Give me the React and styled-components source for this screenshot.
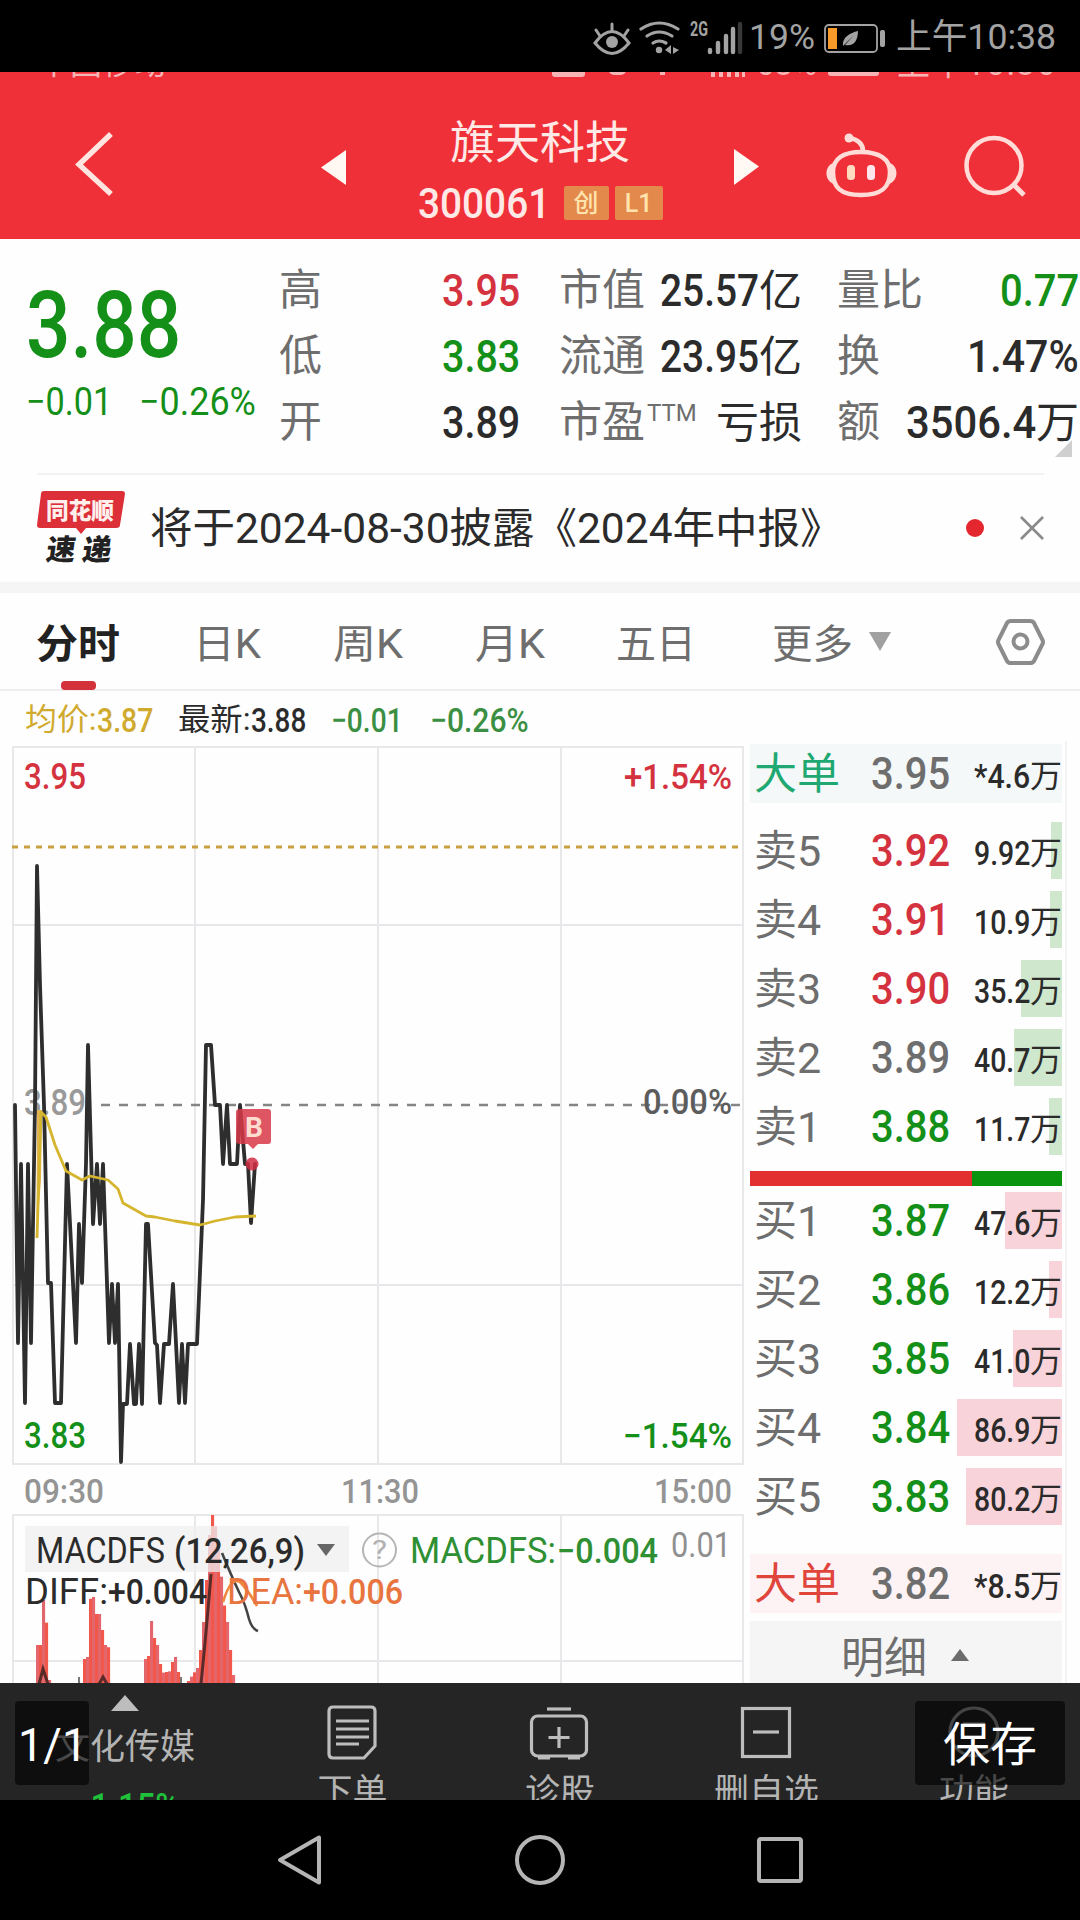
import React, { useLayoutEffect, useRef } from "react";
import styled, { createGlobalStyle } from "styled-components";

const colors = {
  header: "#f03038",
  up: "#d5323f",
  down: "#148f18",
  text: "#2b2b2b",
  label: "#6e6e6e",
  muted: "#8f8f8f",
  grid: "#e8e8ea",
  average: "#d6b52e",
  bar: "#252525",
  barText: "#b4b4b4",
};

const fontStack = `Roboto, "Noto Sans CJK SC", sans-serif`;

const GlobalStyle = createGlobalStyle`
  * { box-sizing: border-box; }
  body {
    margin: 0;
    background: #000;
    font-family: ${fontStack};
    color: ${colors.text};
  }
  svg { display: block; flex: none; }
`;

const FitBox = styled.span`
  display: inline-block;
  flex: none;
  white-space: nowrap;

  > span {
    display: inline-block;
    transform-origin: 0 50%;
  }
`;

// Condenses its text to the given width, like a DIN face would
const Fit = ({ w, className, children }) => {
  const inner = useRef(null);

  useLayoutEffect(() => {
    const el = inner.current;
    el.style.transform = `scaleX(${w / el.offsetWidth})`;
  }, [w, children]);

  return (
    <FitBox className={className} style={{ width: w }}>
      <span ref={inner}>{children}</span>
    </FitBox>
  );
};

const Screen = styled.div`
  width: 1080px;
  height: 1920px;
  display: flex;
  flex-direction: column;
  overflow: hidden;
  background: #fefefe;
`;

/* ---------- system status bar ---------- */

const StatusBar = styled.div`
  height: 72px;
  flex: none;
  padding: 3px 24px 0 0;
  background: #000;
  color: #a3a3a3;
  display: flex;
  align-items: center;
  justify-content: flex-end;
`;

const StatusText = styled(Fit)`
  font-size: 35px;
  line-height: 40px;
`;

const StatusIcons = () => (
  <svg width="160" height="40" viewBox="589 16 160 40" fill="none" stroke="#a3a3a3">
    <path d="M595 41q17-23 34 0q-17 21-34 0z" strokeWidth="3" />
    <circle cx="612" cy="40" r="6" fill="#a3a3a3" stroke="none" />
    <path d="M612 22v7M596 28l4 6M628 28l-4 6" strokeWidth="3" strokeLinecap="round" />
    <g strokeWidth="3.200" strokeLinecap="round">
      <path d="M641 27q18-12 37 0" />
      <path d="M647 34q12-8 25 0" />
      <path d="M653 41q6-4 13 0" />
    </g>
    <circle cx="659" cy="48" r="3.2" fill="#a3a3a3" stroke="none" />
    <path d="M665 48l6-5v9zM673 45l6 3-6 4z" fill="#a3a3a3" stroke="none" />
    <text
      x="690"
      y="34"
      fontSize="21"
      fontWeight="700"
      textLength="18"
      lengthAdjust="spacingAndGlyphs"
      fill="#a3a3a3"
      stroke="none"
    >
      2G
    </text>
    <g strokeWidth="4.400" strokeLinecap="round">
      <path d="M710 48v2M718 41v9M726 34v16M733 27v23" />
      <path d="M740 22v28" stroke="#383838" />
    </g>
  </svg>
);

const Battery = () => (
  <svg width="81" height="40" viewBox="815 16 81 40" fill="none">
    <rect x="825" y="23" width="52" height="27" rx="4" stroke="#a3a3a3" strokeWidth="1.8" />
    <rect x="828" y="26" width="9" height="21" fill="#f79a2a" />
    <rect x="880" y="28" width="5" height="17" rx="2" fill="#a3a3a3" />
    <path d="M843 44c-1-9 7-13 15-15 0 9-4 16-13 14l9-10z" fill="#a3a3a3" />
  </svg>
);

/* ---------- red header ---------- */

const Header = styled.header`
  height: 167px;
  flex: none;
  background: ${colors.header};
`;

const GhostStatus = styled.div`
  height: 8px;
  padding: 0 25px 0 38px;
  display: flex;
  align-items: flex-end;
  justify-content: space-between;
  overflow: hidden;
  color: #f7b4b4;
  font-size: 31px;
  line-height: 33px;
`;

const HeaderRow = styled.div`
  height: 159px;
  display: flex;
  align-items: flex-start;
`;

const TitleBlock = styled.div`
  width: 388px;
  padding-top: 33px;
  display: flex;
  flex-direction: column;
  align-items: center;
  color: #ffe9e6;
`;

const StockName = styled(Fit)`
  font-size: 45px;
  line-height: 62px;
`;

const CodeRow = styled.div`
  width: 245px;
  height: 40px;
  margin-top: 8px;
  display: flex;
  align-items: center;
`;

const StockCode = styled(Fit)`
  padding-top: 2px;
  font-size: 42px;
  line-height: 40px;
  font-weight: 500;
`;

const Badge = styled.span`
  width: ${(props) => props.$width}px;
  height: 34px;
  margin-left: ${(props) => props.$gap}px;
  border-radius: 2px;
  background: #e3894b;
  color: #ffe3ac;
  font-size: 25px;
  line-height: 35px;
  font-weight: 500;
  text-align: center;
`;

const HeaderLeftIcons = () => (
  <svg width="346" height="120" viewBox="0 80 346 120" fill="none">
    <path d="M111 134L79 164.500L111 194" stroke="#ffe4df" strokeWidth="5.400" />
    <path d="M321 167.500L346 150V185Z" fill="#fff8f3" />
  </svg>
);

const HeaderRightIcons = () => (
  <svg width="346" height="130" viewBox="734 80 346 130" fill="none">
    <path d="M734 149L759 166.500L734 185Z" fill="#fff8f3" />
    <g stroke="#ffdcd7" strokeWidth="4.500">
      <path d="M833 172c0-13 10-20 28-20s29 7 29 20c0 15-8 23-29 23s-28-8-28-23z" />
      <path d="M863 151c0-7-4-11-13-13" strokeLinecap="round" />
    </g>
    <circle cx="849" cy="138" r="4.500" fill="#ffdcd7" />
    <path d="M834 163c-10 2-10 18 0 21zM889 163c10 2 10 18 0 21z" fill="#ffdcd7" />
    <rect x="847" y="165" width="8" height="15" rx="3.500" fill="#ffdcc0" />
    <rect x="867" y="165" width="8" height="15" rx="3.500" fill="#ffe6ec" />
    <circle cx="994" cy="165.500" r="27.500" stroke="#ffdcd7" strokeWidth="4.500" />
    <path d="M1013 184l11 11" stroke="#ffdcd7" strokeWidth="5" />
  </svg>
);

/* ---------- quote ---------- */

const Quote = styled.section`
  height: 234px;
  flex: none;
  padding-top: 18px;
  display: flex;
`;

const LastPrice = styled.div`
  width: 279px;
  padding: 31px 0 0 26px;
  color: ${colors.down};
`;

const BigPrice = styled(Fit)`
  font-size: 93px;
  line-height: 76px;
  font-weight: 500;
`;

const ChangeRow = styled.div`
  display: flex;
  gap: 27px;
  margin-top: 18px;
`;

const Change = styled(Fit)`
  font-size: 39px;
  line-height: 40px;
`;

const StatColumn = styled.div`
  width: ${(props) => props.$width}px;
  margin-right: ${(props) => props.$after}px;
`;

const StatRow = styled.div`
  height: 66px;
  display: flex;
  align-items: center;
  justify-content: space-between;
  line-height: 60px;
`;

const StatLabel = styled.span`
  display: flex;
  font-size: 43px;
  color: ${colors.label};
`;

const StatValue = styled.span`
  display: flex;
  font-size: 43px;
  padding-top: 1px;
  color: ${(props) => props.color || colors.text};
`;

const StatNumber = styled(Fit)`
  font-size: 44px;
  font-weight: 500;
`;

const Superscript = styled.span`
  margin-left: 2px;
  font-size: 24px;
  line-height: 42px;
`;

const Corner = styled.i`
  width: 0;
  height: 0;
  margin: -15px 0 0 218px;
  display: block;
  border-left: 17px solid transparent;
  border-bottom: 17px solid #cfcfcf;
`;

const statColumns = [
  {
    width: 241,
    after: 39,
    rows: [
      { label: "高", num: "3.95", w: 78, color: colors.up },
      { label: "低", num: "3.83", w: 78, color: colors.down },
      { label: "开", num: "3.89", w: 78 },
    ],
  },
  {
    width: 243,
    after: 35,
    rows: [
      { label: "市值", num: "25.57", w: 99, unit: "亿" },
      { label: "流通", num: "23.95", w: 99, unit: "亿" },
      { label: "市盈", sup: "TTM", unit: "亏损" },
    ],
  },
  {
    width: 242,
    after: 0,
    rows: [
      { label: "量比", num: "0.77", w: 79, color: colors.down },
      { label: "换", num: "1.47%", w: 112 },
      { label: "额", num: "3506.4", w: 130, unit: "万" },
    ],
  },
];

/* ---------- news strip ---------- */

const News = styled.section`
  height: 109px;
  flex: none;
  margin: 0 36px 0 37px;
  border-top: 2px solid #f2f2f2;
  display: flex;
  align-items: center;
`;

const NewsText = styled(Fit)`
  margin-left: 25px;
  font-size: 42px;
  line-height: 60px;
`;

const NewsDot = styled.i`
  width: 18px;
  height: 18px;
  margin: -2px 0 0 124px;
  border-radius: 50%;
  background: #e4272f;
`;

const CloseButton = styled.span`
  margin: -1px 0 0 36px;
`;

const NewsLogo = () => (
  <svg width="88" height="76" viewBox="37 491 88 76" fontWeight="900">
    <path d="M44 491h78q3 0 3 3l-5 31q0 3-4 3H86l-5 6-5-6H40q-3 0-3-3l4-31q0-3 3-3z" fill="#dc2f38" />
    <text x="46" y="519" fontSize="23" textLength="68" lengthAdjust="spacingAndGlyphs" fill="#fff0ee">
      同花顺
    </text>
    <g transform="skewX(-8)" fontSize="29" fill="#222">
      <text x="124" y="560" textLength="29" lengthAdjust="spacingAndGlyphs">
        速
      </text>
      <text x="160" y="560" textLength="29" lengthAdjust="spacingAndGlyphs">
        递
      </text>
    </g>
  </svg>
);

const CloseIcon = () => (
  <svg width="24" height="24" viewBox="0 0 24 24">
    <path d="M1 1L23 23M23 1L1 23" stroke="#8a8a8a" strokeWidth="2.600" />
  </svg>
);

/* ---------- tabs ---------- */

const Tabs = styled.nav`
  height: 109px;
  flex: none;
  border-top: 11px solid #f5f5f5;
  border-bottom: 2px solid #eeeeee;
  padding-left: 36px;
  display: flex;
`;

const Tab = styled.div`
  margin-right: ${(props) => props.$after}px;
  height: 97px;
  padding-top: 21px;
  display: flex;
  flex-direction: column;
  align-items: center;
  font-size: 40px;
  line-height: 62px;
  font-weight: ${(props) => (props.$active ? 700 : 400)};
  color: ${(props) => (props.$active ? "#222" : colors.label)};

  &::after {
    content: "";
    width: 35px;
    height: 9px;
    margin-top: 5px;
    border-radius: 4px;
    background: ${(props) => (props.$active ? "#d4323a" : "transparent")};
  }
`;

const tabs = [
  { name: "分时", w: 84, after: 73, active: true },
  { name: "日K", w: 68, after: 72 },
  { name: "周K", w: 70, after: 72 },
  { name: "月K", w: 70, after: 71 },
  { name: "五日", w: 80, after: 76 },
  { name: "更多", w: 81, after: 15 },
];

const TabIcons = () => (
  <svg width="180" height="96" viewBox="868 593 180 96" fill="none">
    <path d="M869 632h22l-11 19z" fill="#a0a0a0" />
    <path
      d="M1011 621h19q3 0 4 2l8.500 17q1 2 0 4l-8.500 17q-1 2-4 2h-19q-3 0-4-2l-8.500-17q-1-2 0-4l8.500-17q1-2 4-2z"
      stroke="#8c8c8c"
      strokeWidth="4"
    />
    <circle cx="1020.500" cy="641.500" r="7" stroke="#8c8c8c" strokeWidth="4" />
  </svg>
);

/* ---------- price summary ---------- */

const Summary = styled.div`
  height: 50px;
  flex: none;
  padding: 8px 0 0 25px;
  display: flex;
  align-items: center;
  line-height: 42px;
`;

const SummaryItem = styled.span`
  margin-right: ${(props) => props.$after || 0}px;
  display: flex;
  font-size: 34px;
  color: ${(props) => props.color};
`;

const SummaryLabel = styled(Fit)`
  font-size: 31px;
`;

const SummaryNumber = styled(Fit)`
  font-weight: 500;
`;

/* ---------- chart ---------- */

const Body = styled.main`
  height: 942px;
  flex: none;
  display: flex;
`;

const priceLine = [
  [15, 1105], [18, 1343], [21, 1164], [25, 1403], [28, 1164], [31, 1343],
  [35, 1105], [37, 866], [40, 985], [44, 1105], [48, 1283], [51, 1283],
  [55, 1403], [61, 1403], [67, 1164], [76, 1343], [79, 1224], [82, 1283],
  [86, 1164], [88, 1045], [93, 1224], [97, 1164], [100, 1224], [103, 1164],
  [109, 1343], [112, 1284], [115, 1343], [118, 1284], [121, 1462], [123, 1404],
  [127, 1404], [130, 1344], [134, 1404], [136, 1404], [139, 1344], [142, 1404],
  [146, 1224], [148, 1224], [155, 1343], [157, 1345], [160, 1403], [164, 1344],
  [169, 1344], [173, 1284], [179, 1403], [182, 1344], [185, 1403], [188, 1344],
  [197, 1344], [203, 1200], [206, 1045], [211, 1045], [215, 1105], [220, 1105],
  [223, 1164], [227, 1105], [230, 1164], [237, 1164], [240, 1105], [245, 1164],
  [248, 1164], [251, 1223], [255, 1164],
];

const averageLine = [
  [37, 1238], [41, 1112], [46, 1117], [55, 1145], [66, 1171], [82, 1180],
  [90, 1176], [108, 1180], [118, 1189], [123, 1203], [146, 1216], [155, 1217],
  [175, 1221], [200, 1225], [215, 1221], [235, 1217], [256, 1216],
];

// Outlines of the histogram humps; bars are sampled under them
const humps = [
  [[36, 1645], [39, 1645], [40, 1600], [43, 1600], [44, 1622], [47, 1624], [48, 1680]],
  [[83, 1659], [86, 1657], [87, 1600], [92, 1597], [93, 1614], [98, 1614], [99, 1632], [103, 1628], [104, 1645], [108, 1648]],
  [[144, 1659], [147, 1656], [148, 1623], [151, 1620], [153, 1638], [156, 1645], [158, 1655], [160, 1673], [170, 1671], [172, 1653], [175, 1659], [177, 1672]],
  [[187, 1681], [196, 1668], [199, 1650], [202, 1622], [205, 1580], [208, 1535], [211, 1515], [212, 1515], [215, 1532], [219, 1565], [222, 1600], [226, 1622], [229, 1650], [232, 1675]],
];

const heightAt = (hump, x) => {
  const i = hump.findIndex(([px]) => px >= x);
  if (i <= 0) return hump[0][1];
  const [x0, y0] = hump[i - 1];
  const [x1, y1] = hump[i];
  return y0 + ((x - x0) / (x1 - x0)) * (y1 - y0);
};

const bars = humps.flatMap((hump) => {
  const list = [];
  for (let x = hump[0][0]; x <= hump[hump.length - 1][0]; x += 3) {
    list.push([x, heightAt(hump, x)]);
  }
  return list;
});

const toPoints = (list) => list.map((p) => p.join(",")).join(" ");

const ChartText = ({ x, y, w, size = 35, fill, weight = 400, children }) => (
  <text
    x={x}
    y={y}
    fontSize={size}
    fontWeight={weight}
    fill={fill}
    textLength={w}
    lengthAdjust="spacingAndGlyphs"
  >
    {children}
  </text>
);

const Chart = () => (
  <svg width="750" height="942" viewBox="0 741 750 942" fill="none">
    <g stroke={colors.grid} strokeWidth="2">
      <rect x="13" y="747" width="730" height="717" />
      <path d="M195 746V1464M378 746V1464M561 746V1464M13 925H743M13 1285H743" />
      <path d="M13 1690V1515H743V1690M195 1514V1690M378 1514V1690M561 1514V1690M13 1661H743" />
    </g>
    <path d="M12 847H740" stroke="#c9a040" strokeWidth="3" strokeDasharray="6 6" />
    <path d="M101 1105H743" stroke="#858585" strokeWidth="2.600" strokeDasharray="9 9" />

    <ChartText x={24} y={789} w={62} size={36} weight={500} fill={colors.up}>3.95</ChartText>
    <ChartText x={624} y={789} w={108} weight={500} fill={colors.up}>+1.54%</ChartText>
    <ChartText x={24} y={1115} w={62} size={36} weight={500} fill="#999">3.89</ChartText>
    <ChartText x={643} y={1114} w={89} weight={500} fill="#5c5c5c">0.00%</ChartText>
    <ChartText x={24} y={1448} w={62} size={36} weight={500} fill={colors.down}>3.83</ChartText>
    <ChartText x={623} y={1448} w={109} weight={500} fill={colors.down}>−1.54%</ChartText>
    <ChartText x={24} y={1503} w={80} size={34} weight={500} fill="#949494">09:30</ChartText>
    <ChartText x={341} y={1503} w={78} size={34} weight={500} fill="#949494">11:30</ChartText>
    <ChartText x={654} y={1503} w={78} size={34} weight={500} fill="#949494">15:00</ChartText>

    <polyline
      points={toPoints(priceLine)}
      stroke="#2e2e2e"
      strokeWidth="3.800"
      strokeLinejoin="round"
      strokeLinecap="round"
    />
    <path d="M36.500 1235L37 1110H42L41 1180Z" fill="#e3b455" />
    <polyline points={toPoints(averageLine)} stroke={colors.average} strokeWidth="2.800" strokeLinejoin="round" />

    <g opacity="0.85">
      <path d="M240 1109h28q3 0 3 3v29q0 3-3 3h-10l-5 5-5-5h-8q-4 0-4-3v-29q0-3 4-3z" fill="#d93848" />
      <circle cx="252" cy="1164" r="6.500" fill="#d22c44" />
    </g>
    <ChartText x={245} y={1137} w={18} size={28} weight={700} fill="#ffdcd0">B</ChartText>

    {bars.map(([x, y]) => (
      <rect key={x} x={x} y={y} width="3.100" height={1690 - y} fill={x % 2 ? "#f2574c" : "#e2666c"} />
    ))}
    <rect x="25" y="1526" width="324" height="46" fill="#efefef" fillOpacity="0.75" />
    <g stroke="#5a2a28" strokeWidth="3">
      <path d="M39 1684l4-15 5 15M99 1684l4-7 4 7M201 1684q6-60 10-110" />
      <path d="M79 1677v6M181 1677v6" stroke="#777" strokeWidth="2" />
    </g>
    <path d="M222 1553q9 22 17 39 6 11 10 27 3 10 9 12" stroke="#444" strokeWidth="2.600" />
    <path d="M223 1602q8-26 17-20 8 8 17 24" stroke="#f0863f" strokeWidth="2.600" />

    <ChartText x={36} y={1563} w={129} size={36} fill="#2b2b2b">MACDFS</ChartText>
    <ChartText x={174} y={1563} w={131} size={35} weight={500} fill="#2b2b2b">(12,26,9)</ChartText>
    <path d="M317 1544h18l-9 12z" fill="#666" />
    <circle cx="379.500" cy="1550" r="16.500" stroke="#b5b5b5" strokeWidth="2" />
    <ChartText x={372} y={1559} w={15} size={26} fill="#b0b0b0">?</ChartText>
    <ChartText x={410} y={1563} w={146} size={36} fill="#2f8f33">MACDFS:</ChartText>
    <ChartText x={557} y={1563} w={101} size={35} weight={500} fill="#2f8f33">−0.004</ChartText>
    <ChartText x={671} y={1557} w={60} size={35} fill={colors.muted}>0.01</ChartText>
    <ChartText x={25} y={1604} w={83} size={36} fill="#2b2b2b">DIFF:</ChartText>
    <ChartText x={108} y={1604} w={99} size={35} weight={500} fill="#2b2b2b">+0.004</ChartText>
    <ChartText x={227} y={1604} w={76} size={36} fill="#e87440">DEA:</ChartText>
    <ChartText x={303} y={1604} w={100} size={35} weight={500} fill="#e87440">+0.006</ChartText>
  </svg>
);

/* ---------- order book ---------- */

const Book = styled.aside`
  width: 317px;
  padding: 3px 3px 0 0;
  border-right: 2px solid #f3f3f3;
`;

const BookRow = styled.div`
  height: ${(props) => (props.$big ? 59 : 69)}px;
  padding-left: 4px;
  display: flex;
  align-items: center;
  background: ${(props) => props.$tint || "transparent"};
  margin-bottom: ${(props) => props.$after || 0}px;
`;

const BookLabel = styled.span`
  width: 117px;
  flex: none;
  font-size: 43px;
  line-height: 56px;
  color: ${(props) => props.color || colors.label};
`;

const BookPrice = styled(Fit)`
  padding-top: 1px;
  font-size: 45px;
  line-height: 56px;
  font-weight: 500;
  color: ${(props) => props.color};
`;

const Volume = styled.div`
  width: 115px;
  height: 57px;
  display: flex;
  justify-content: flex-end;
  font-size: 34px;
  line-height: 63px;
  background: linear-gradient(${(props) => props.$fill}, ${(props) => props.$fill}) no-repeat right / ${(props) => props.$bar}px 100%;
`;

const VolumeNumber = styled(Fit)`
  font-weight: 500;
`;

const Unit = styled.span`
  width: 32px;
  font-size: 32px;
`;

const Ratio = styled.div`
  height: 15px;
  margin: 10px 0 0;
  display: flex;
  background: #0a930d;

  &::before {
    content: "";
    width: 222px;
    background: #e23030;
  }
`;

const DetailButton = styled.div`
  height: 62px;
  margin-top: 8px;
  padding: 12px 2px 0 0;
  display: flex;
  align-items: center;
  justify-content: center;
  gap: 24px;
  background: #f5f5f5;
  color: ${colors.label};
  font-size: 43px;
  line-height: 56px;

  svg {
    margin-top: -6px;
  }
`;

const asks = [
  { label: "卖5", price: "3.92", color: colors.up, volume: "9.92", bar: 11 },
  { label: "卖4", price: "3.91", color: colors.up, volume: "10.9", bar: 12 },
  { label: "卖3", price: "3.90", color: colors.up, volume: "35.2", bar: 41 },
  { label: "卖2", price: "3.89", color: colors.label, volume: "40.7", bar: 48 },
  { label: "卖1", price: "3.88", color: colors.down, volume: "11.7", bar: 13 },
];

const bids = [
  { label: "买1", price: "3.87", color: colors.down, volume: "47.6", bar: 57 },
  { label: "买2", price: "3.86", color: colors.down, volume: "12.2", bar: 13 },
  { label: "买3", price: "3.85", color: colors.down, volume: "41.0", bar: 49 },
  { label: "买4", price: "3.84", color: colors.down, volume: "86.9", bar: 105 },
  { label: "买5", price: "3.83", color: colors.down, volume: "80.2", bar: 96 },
];

const BookLine = ({ row, fill, tint, after, labelColor }) => (
  <BookRow $big={!!tint} $tint={tint} $after={after}>
    <BookLabel color={labelColor}>{row.label}</BookLabel>
    <BookPrice w={79} color={row.color}>
      {row.price}
    </BookPrice>
    <Volume $fill={fill} $bar={row.bar || 0}>
      <VolumeNumber w={56}>{row.volume}</VolumeNumber>
      <Unit>万</Unit>
    </Volume>
  </BookRow>
);

/* ---------- app bottom bar ---------- */

const BottomBar = styled.footer`
  position: relative;
  height: 117px;
  flex: none;
  display: flex;
  overflow: hidden;
  background: ${colors.bar};
  color: ${colors.barText};
`;

const Sector = styled.div`
  width: 250px;
  padding-top: 12px;
  display: flex;
  flex-direction: column;
  align-items: center;
  font-size: 35px;
  line-height: 73px;
`;

const SectorChange = styled(Fit)`
  margin-top: -1px;
  font-size: 37px;
  line-height: 48px;
  font-weight: 500;
  color: #1fc13a;
`;

const Action = styled.div`
  width: ${(props) => props.$width}px;
  padding-top: 20px;
  display: flex;
  flex-direction: column;
  align-items: center;
  font-size: 35px;
  line-height: 50px;

  svg {
    margin-bottom: 5px;
  }
`;

const Overlay = styled.div`
  position: absolute;
  top: 18px;
  left: ${(props) => props.$left}px;
  width: ${(props) => props.$width}px;
  height: 84px;
  border-radius: 4px;
  background: rgba(0, 0, 0, 0.6);
  color: #fff;
  font-size: 47px;
  line-height: 88px;
  text-align: center;
`;

const ActionIcon = ({ children }) => (
  <svg width="62" height="60" viewBox="0 0 62 60" fill="none" stroke="#bdbdbd" strokeWidth="3.200">
    {children}
  </svg>
);

/* ---------- system navigation ---------- */

const SystemNav = styled.nav`
  flex: 1;
  background: #000;
  display: flex;
  justify-content: center;
  align-items: center;
  gap: 190px;
`;

const NavIcon = ({ children }) => (
  <svg width="50" height="54" viewBox="0 0 50 54" fill="none" stroke="#b5b5b5" strokeWidth="4">
    {children}
  </svg>
);

const App = () => (
  <Screen>
    <GlobalStyle />

    <StatusBar>
      <StatusIcons />
      <StatusText w={66}>19%</StatusText>
      <Battery />
      <StatusText w={160}>上午10:38</StatusText>
    </StatusBar>

    <Header>
      <GhostStatus>
        <Fit w={128}>中国移动</Fit>
        <svg width="505" height="8" viewBox="550 72 505 8" fill="#f7b4b4">
          <rect x="552" y="66" width="33" height="11" rx="3" />
          <rect x="609" y="66" width="17" height="9" rx="6" />
          <rect x="660" y="70" width="5" height="5" />
          <path d="M711 72h4v5h-4zM719 72h4v5h-4zM727 72h4v5h-4zM735 72h4v5h-4zM742 72h3v5h-3z" />
          <rect x="828" y="66" width="51" height="10" rx="3" />
          <text x="756" y="75" fontSize="33">63%</text>
          <text x="897" y="75" fontSize="33" textLength="158">上午10:36</text>
        </svg>
      </GhostStatus>
      <HeaderRow>
        <HeaderLeftIcons />
        <TitleBlock>
          <StockName w={180}>旗天科技</StockName>
          <CodeRow>
            <StockCode w={132}>300061</StockCode>
            <Badge $width={45} $gap={14}>创</Badge>
            <Badge $width={48} $gap={6}>L1</Badge>
          </CodeRow>
        </TitleBlock>
        <HeaderRightIcons />
      </HeaderRow>
    </Header>

    <Quote>
      <LastPrice>
        <BigPrice w={155}>3.88</BigPrice>
        <ChangeRow>
          <Change w={86}>−0.01</Change>
          <Change w={117}>−0.26%</Change>
        </ChangeRow>
      </LastPrice>
      {statColumns.map((column) => (
        <StatColumn key={column.rows[0].label} $width={column.width} $after={column.after}>
          {column.rows.map((row) => (
            <StatRow key={row.label}>
              <StatLabel>
                {row.label}
                {row.sup && <Superscript>{row.sup}</Superscript>}
              </StatLabel>
              <StatValue color={row.color}>
                {row.num && <StatNumber w={row.w}>{row.num}</StatNumber>}
                {row.unit}
              </StatValue>
            </StatRow>
          ))}
          {column.after === 0 && <Corner />}
        </StatColumn>
      ))}
    </Quote>

    <News>
      <NewsLogo />
      <NewsText w={692}>将于2024-08-30披露《2024年中报》</NewsText>
      <NewsDot />
      <CloseButton>
        <CloseIcon />
      </CloseButton>
    </News>

    <Tabs>
      {tabs.map((tab) => (
        <Tab key={tab.name} $active={tab.active} $after={tab.after}>
          <Fit w={tab.w}>{tab.name}</Fit>
        </Tab>
      ))}
      <TabIcons />
    </Tabs>

    <Summary>
      <SummaryItem color="#d0aa2e" $after={25}>
        <SummaryLabel w={72}>均价:</SummaryLabel>
        <SummaryNumber w={56}>3.87</SummaryNumber>
      </SummaryItem>
      <SummaryItem color="#2b2b2b" $after={25}>
        <SummaryLabel w={73}>最新:</SummaryLabel>
        <SummaryNumber w={55}>3.88</SummaryNumber>
      </SummaryItem>
      <SummaryItem color="#3b8f42" $after={27}>
        <SummaryNumber w={72}>−0.01</SummaryNumber>
      </SummaryItem>
      <SummaryItem color="#3b8f42">
        <SummaryNumber w={99}>−0.26%</SummaryNumber>
      </SummaryItem>
    </Summary>

    <Body>
      <Chart />
      <Book>
        <BookLine
          row={{ label: "大单", price: "3.95", color: colors.label, volume: "*4.6" }}
          tint="#f4f8f8"
          after={13}
          fill="transparent"
          labelColor="#1fa871"
        />
        {asks.map((row) => (
          <BookLine key={row.label} row={row} fill="#cfe8cd" />
        ))}
        <Ratio />
        {bids.map((row) => (
          <BookLine key={row.label} row={row} fill="#f8d3da" after={row.label === "买5" ? 23 : 0} />
        ))}
        <BookLine
          row={{ label: "大单", price: "3.82", color: colors.label, volume: "*8.5" }}
          tint="#fdf2f4"
          fill="transparent"
          labelColor="#e0453c"
        />
        <DetailButton>
          明细
          <svg width="18" height="12" viewBox="0 0 18 12">
            <path d="M9 0L18 12H0Z" fill="#6b6b6b" />
          </svg>
        </DetailButton>
      </Book>
    </Body>

    <BottomBar>
      <Sector>
        <svg width="28" height="16" viewBox="0 0 28 16">
          <path d="M14 0L28 16H0Z" fill="#bdbdbd" />
        </svg>
        文化传媒
        <SectorChange w={107}>−1.15%</SectorChange>
      </Sector>
      <Action $width={205}>
        <ActionIcon>
          <path d="M11 4h38q4 0 4 4v35L42 55H11q-4 0-4-4V8q0-4 4-4z" />
          <path d="M14 18h33M14 26h33M14 34h33M14 41h23" />
        </ActionIcon>
        下单
      </Action>
      <Action $width={210}>
        <ActionIcon>
          <path d="M18 6h24" />
          <rect x="2.500" y="13" width="55" height="40" rx="6" />
          <path d="M30 24v21M19.500 34.500h21M9 55h12M39 55h12" />
        </ActionIcon>
        诊股
      </Action>
      <Action $width={203}>
        <ActionIcon>
          <rect x="6.500" y="5.500" width="47" height="48" />
          <path d="M17 29h26" />
        </ActionIcon>
        删自选
      </Action>
      <Action $width={212}>
        <ActionIcon>
          <circle cx="31" cy="29" r="24" stroke="#aaa" />
          <path d="M20 21h22" />
        </ActionIcon>
        功能
      </Action>
      <Overlay $left={15} $width={74}>
        <Fit w={69}>1/1</Fit>
      </Overlay>
      <Overlay $left={915} $width={150}>保存</Overlay>
    </BottomBar>

    <SystemNav>
      <NavIcon>
        <path d="M5 27L44 4.500V49.500Z" strokeLinejoin="round" />
      </NavIcon>
      <NavIcon>
        <circle cx="25" cy="27" r="23" />
      </NavIcon>
      <NavIcon>
        <rect x="4" y="6" width="42" height="42" rx="2" />
      </NavIcon>
    </SystemNav>
  </Screen>
);

export default App;
